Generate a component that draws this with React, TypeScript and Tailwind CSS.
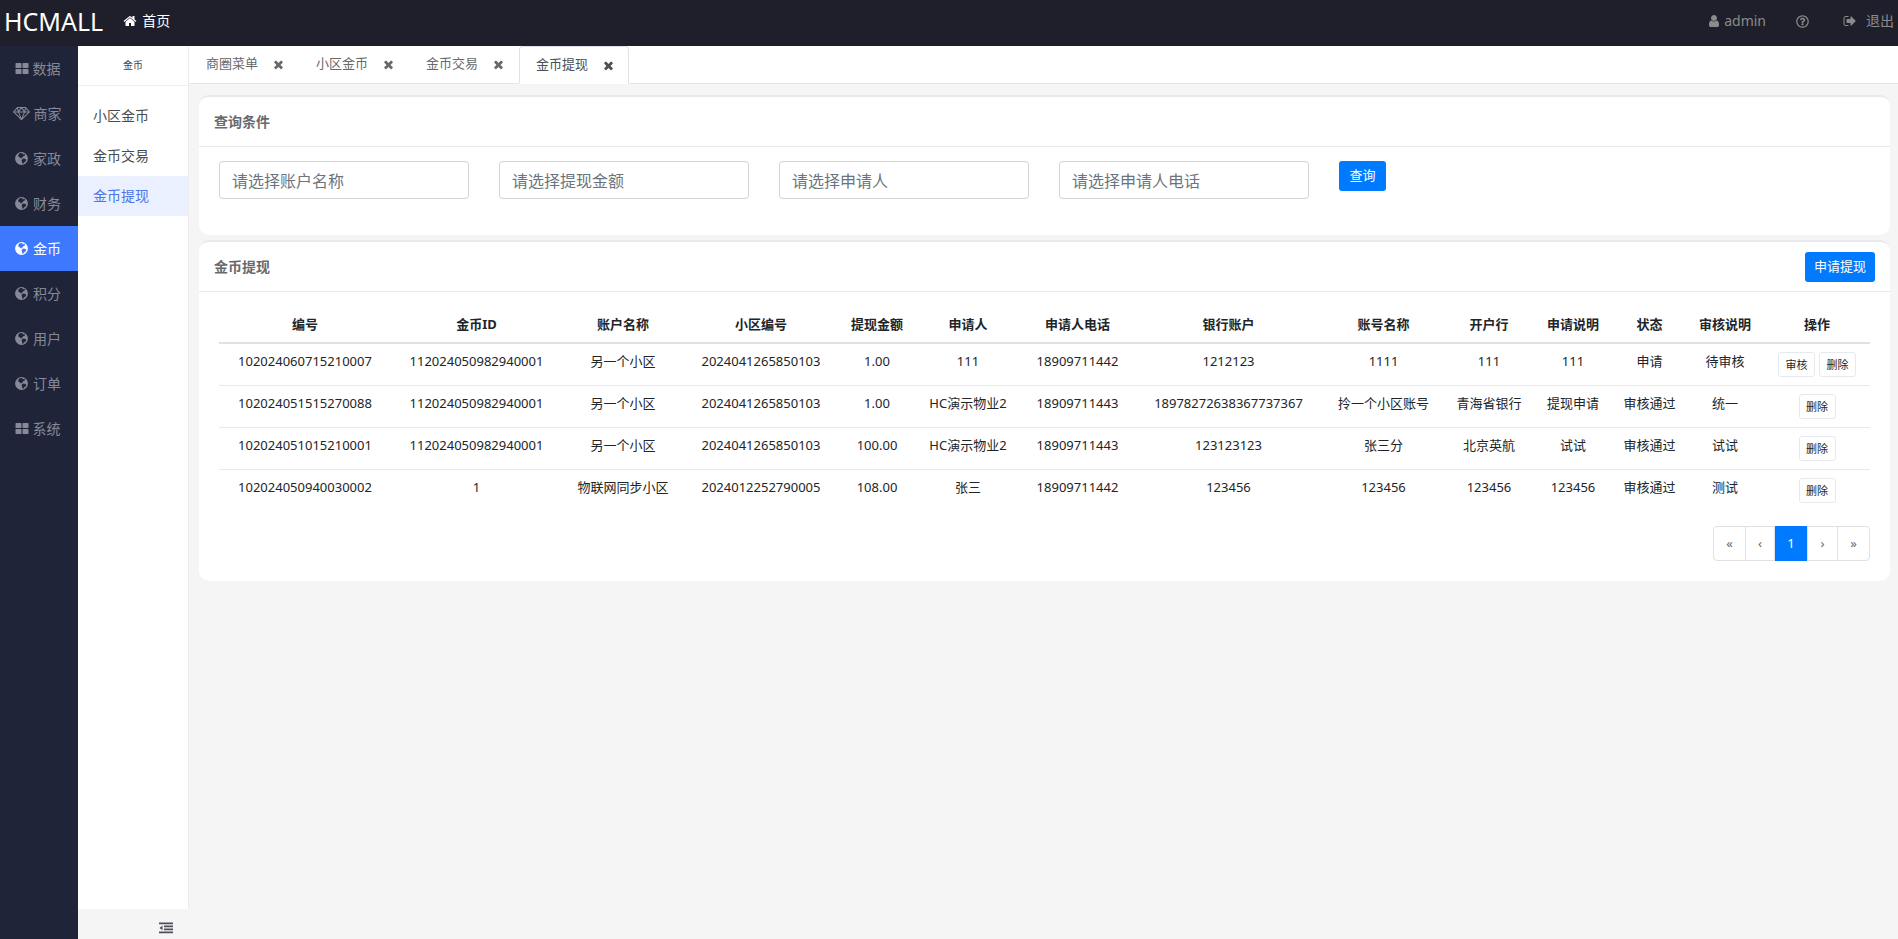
import React from 'react';
import { FaRegQuestionCircle } from 'react-icons/fa';
import clsx from 'clsx';

type IconName = 'grid' | 'diamond' | 'globe' | 'home' | 'user' | 'close' | 'signOut' | 'outdent';

const ICONS: Record<IconName, React.ReactNode> = {
  grid: (
    <>
      <rect x="64" y="128" width="768" height="640" rx="110" />
      <rect x="960" y="128" width="768" height="640" rx="110" />
      <rect x="64" y="896" width="768" height="640" rx="110" />
      <rect x="960" y="896" width="768" height="640" rx="110" />
    </>
  ),
  diamond: (
    <g fill="none" stroke="currentColor" strokeWidth="120" strokeLinejoin="round">
      <path d="M400 192H1392L1830 704L896 1640L-38 704Z" />
      <path d="M-38 704H1830M400 192L520 704L896 1600L1272 704L1392 192M520 704L896 192L1272 704" />
    </g>
  ),
  globe: (
    <path
      fillRule="evenodd"
      d="M896 128a768 768 0 1 0 0 1536a768 768 0 1 0 0-1536ZM620 300L860 230L1060 270L980 380L1120 400L1220 330L1340 440L1240 580L1100 620L1040 760L900 800L940 900L800 860L680 740L540 680L500 500ZM980 980L1120 890L1300 940L1470 1040L1400 1220L1240 1340L1120 1480L990 1520L980 1320L900 1150Z"
    />
  ),
  home: (
    <path d="M1472 992v480q0 26-19 45t-45 19h-384v-384h-256v384h-384q-26 0-45-19t-19-45v-480q0-1 .5-3t.5-3l575-474 575 474q1 2 1 6zm223-69l-62 74q-8 9-21 11h-3q-13 0-21-7l-692-577-692 577q-12 8-24 7-13-2-21-11l-62-74q-8-10-7-23.5t11-21.5l719-599q32-26 76-26t76 26l244 204v-195q0-14 9-23t23-9h192q14 0 23 9t9 23v408l219 182q10 8 11 21.5t-7 23.5z" />
  ),
  user: (
    <path d="M1536 1399q0 109-62.5 187t-150.5 78h-854q-88 0-150.5-78t-62.5-187q0-85 8.5-160.5t31.5-152 58.5-131 94-89 134.5-34.5q131 128 313 128t313-128q76 0 134.5 34.5t94 89 58.5 131 31.5 152 8.5 160.5zm-256-887q0 159-112.5 271.5t-271.5 112.5-271.5-112.5-112.5-271.5 112.5-271.5 271.5-112.5 271.5 112.5 112.5 271.5z" />
  ),
  close: (
    <path d="M1490 1322q0 40-28 68l-136 136q-28 28-68 28t-68-28l-294-294-294 294q-28 28-68 28t-68-28l-136-136q-28-28-28-68t28-68l294-294-294-294q-28-28-28-68t28-68l136-136q28-28 68-28t68 28l294 294 294-294q28-28 68-28t68 28l136 136q28 28 28 68t-28 68l-294 294 294 294q28 28 28 68z" />
  ),
  signOut: (
    <path d="M704 1440q0 4 1 20t.5 26.5-3 23.5-10 19.5-20.5 6.5h-320q-119 0-203.5-84.5t-84.5-203.5v-704q0-119 84.5-203.5t203.5-84.5h320q13 0 22.5 9.5t9.5 22.5q0 4 1 20t.5 26.5-3 23.5-10 19.5-20.5 6.5h-320q-66 0-113 47t-47 113v704q0 66 47 113t113 47h312l11.5 1 11.5 3 8 5.5 7 9 2 13.5zm928-544q0 26-19 45l-544 544q-19 19-45 19t-45-19-19-45v-288h-448q-26 0-45-19t-19-45v-384q0-26 19-45t45-19h448v-288q0-26 19-45t45-19 45 19l544 544q19 19 19 45z" />
  ),
  outdent: (
    <path d="M0 192H1792V416H0ZM640 576H1792V800H640ZM640 960H1792V1184H640ZM0 1344H1792V1568H0ZM448 576V1184L64 880Z" />
  ),
};

function Icon({ name, className }: { name: IconName; className?: string }) {
  return (
    <svg viewBox="0 0 1792 1792" fill="currentColor" aria-hidden="true" className={clsx('shrink-0 overflow-visible', className)}>
      {ICONS[name]}
    </svg>
  );
}

const MENUS: { label: string; icon: IconName }[] = [
  { label: '数据', icon: 'grid' },
  { label: '商家', icon: 'diamond' },
  { label: '家政', icon: 'globe' },
  { label: '财务', icon: 'globe' },
  { label: '金币', icon: 'globe' },
  { label: '积分', icon: 'globe' },
  { label: '用户', icon: 'globe' },
  { label: '订单', icon: 'globe' },
  { label: '系统', icon: 'grid' },
];

const SUB_MENUS = ['小区金币', '金币交易', '金币提现'];

const TABS = ['商圈菜单', '小区金币', '金币交易', '金币提现'];

const FILTERS = ['请选择账户名称', '请选择提现金额', '请选择申请人', '请选择申请人电话'];

const COLUMNS = [
  { title: '编号', width: 'w-[172px]' },
  { title: '金币ID', width: 'w-[171px]' },
  { title: '账户名称', width: 'w-[122px]' },
  { title: '小区编号', width: 'w-[154px]' },
  { title: '提现金额', width: 'w-[78px]' },
  { title: '申请人', width: 'w-[104px]' },
  { title: '申请人电话', width: 'w-[115px]' },
  { title: '银行账户', width: 'w-[187px]' },
  { title: '账号名称', width: 'w-[123px]' },
  { title: '开户行', width: 'w-[88px]' },
  { title: '申请说明', width: 'w-[80px]' },
  { title: '状态', width: 'w-[73px]' },
  { title: '审核说明', width: 'w-[78px]' },
  { title: '操作', width: 'w-[106px]' },
];

const ROWS = [
  {
    cells: ['102024060715210007', '112024050982940001', '另一个小区', '2024041265850103', '1.00', '111', '18909711442', '1212123', '1111', '111', '111', '申请', '待审核'],
    actions: ['审核', '删除'],
  },
  {
    cells: ['102024051515270088', '112024050982940001', '另一个小区', '2024041265850103', '1.00', 'HC演示物业2', '18909711443', '18978272638367737367', '拎一个小区账号', '青海省银行', '提现申请', '审核通过', '统一'],
    actions: ['删除'],
  },
  {
    cells: ['102024051015210001', '112024050982940001', '另一个小区', '2024041265850103', '100.00', 'HC演示物业2', '18909711443', '123123123', '张三分', '北京英航', '试试', '审核通过', '试试'],
    actions: ['删除'],
  },
  {
    cells: ['102024050940030002', '1', '物联网同步小区', '2024012252790005', '108.00', '张三', '18909711442', '123456', '123456', '123456', '123456', '审核通过', '测试'],
    actions: ['删除'],
  },
];

const PAGES = [
  { label: '«', width: 'w-8' },
  { label: '‹', width: 'w-[29px]' },
  { label: '1', width: 'w-[33px]', active: true },
  { label: '›', width: 'w-[30px]' },
  { label: '»', width: 'w-[31px]' },
];

function Header() {
  return (
    <header className="flex h-[46px] shrink-0 items-center justify-between bg-[#1e1f2b] pb-1 pl-1 pr-1">
      <div className="flex items-center">
        <h1 className="text-[25px] leading-none text-white">HCMALL</h1>
        <a href="#home" className="ml-5 flex items-center gap-[5px] text-sm text-white">
          <Icon name="home" className="size-[14px]" />
          首页
        </a>
      </div>
      <nav className="flex items-center text-sm text-[#8b8b8b]">
        <a href="#user" className="flex items-center gap-[3px]">
          <Icon name="user" className="size-[14px]" />
          admin
        </a>
        <a href="#help" aria-label="帮助" className="ml-[30px]">
          <FaRegQuestionCircle className="size-[13px]" />
        </a>
        <a href="#logout" className="ml-[34px] flex items-center gap-[9px]">
          <Icon name="signOut" className="size-[14px]" />
          退出
        </a>
      </nav>
    </header>
  );
}

function MainMenu() {
  return (
    <nav className="w-[78px] shrink-0 bg-[#1f2438] text-sm">
      {MENUS.map(({ label, icon }) => (
        <a
          key={label}
          href="#menu"
          className={clsx(
            'flex h-[45px] items-center justify-center pr-[3px]',
            icon === 'diamond' ? 'gap-[5px]' : 'gap-1',
            label === '金币' ? 'bg-[#3e78ff] text-white' : 'text-[#868a98]'
          )}
        >
          <Icon name={icon} className={icon === 'grid' ? 'size-[14px]' : 'size-[15px]'} />
          {label}
        </a>
      ))}
    </nav>
  );
}

function SubMenu() {
  return (
    <aside className="flex w-[111px] shrink-0 flex-col">
      <div className="flex flex-1 flex-col border-r border-[#ececec] bg-white">
        <div className="flex h-10 items-center justify-center border-b border-[#efefef] text-[10px] text-[#444]">金币</div>
        <nav className="mt-[10px] text-sm">
          {SUB_MENUS.map((label) => (
            <a
              key={label}
              href="#sub"
              className={clsx(
                'flex h-10 items-center pl-[15px]',
                label === '金币提现' ? 'bg-[#eaf0ff] text-[#4b76e8]' : 'text-[#4a4d50]'
              )}
            >
              {label}
            </a>
          ))}
        </nav>
      </div>
      <div className="flex h-[30px] items-center justify-end pr-4 pt-2">
        <button type="button" aria-label="收起菜单" className="text-[#4c5058]">
          <Icon name="outdent" className="size-[14px]" />
        </button>
      </div>
    </aside>
  );
}

function Tabs() {
  return (
    <div className="flex h-[38px] items-end border-b border-[#e4e6e9] bg-white text-[13px]">
      {TABS.map((label) => {
        const active = label === '金币提现';
        return (
          <div
            key={label}
            className={clsx(
              'flex h-[38px] items-center gap-[14px] rounded-t border pl-4 pr-[13px]',
              active ? '-mb-px border-[#dee2e6] border-b-white bg-white text-[#495057]' : 'border-transparent text-[#676a6c]'
            )}
          >
            <a href="#tab">{label}</a>
            <button type="button" aria-label={`关闭${label}`}>
              <Icon name="close" className="size-[13px]" />
            </button>
          </div>
        );
      })}
    </div>
  );
}

function Card({ title, extra, children }: { title: string; extra?: React.ReactNode; children: React.ReactNode }) {
  return (
    <section className="rounded-[10px] border-t-2 border-[#e7eaec] bg-white">
      <div className="flex h-[50px] items-center justify-between border-b border-[#e7eaec] px-[15px]">
        <h2 className="text-sm font-bold text-[#676a6c]">{title}</h2>
        {extra}
      </div>
      {children}
    </section>
  );
}

function SearchCard() {
  return (
    <Card title="查询条件">
      <form className="flex h-[88px] items-start gap-[30px] px-5 pt-[14px]">
        {FILTERS.map((placeholder) => (
          <input
            key={placeholder}
            type="text"
            aria-label={placeholder}
            placeholder={placeholder}
            className="h-[38px] w-[250px] min-w-0 rounded border border-[#ced4da] bg-white px-3 pt-[2px] text-base text-[#495057] placeholder:text-[#6c757d]"
          />
        ))}
        <button type="button" className="h-[30px] w-[47px] shrink-0 rounded-[3px] bg-[#007bff] text-[13px] text-white">
          查询
        </button>
      </form>
    </Card>
  );
}

function WithdrawTable() {
  return (
    <table className="w-full table-fixed text-center text-[13px] leading-5 text-[#212529]">
      <thead>
        <tr className="h-[37px] border-b-2 border-[#dee2e6]">
          {COLUMNS.map(({ title, width }) => (
            <th key={title} scope="col" className={clsx('whitespace-nowrap font-bold', width)}>
              {title}
            </th>
          ))}
        </tr>
      </thead>
      <tbody>
        {ROWS.map(({ cells, actions }) => (
          <tr key={cells[0]} className="h-[42px] border-b border-[#e7eaec] align-top last:border-b-0">
            {cells.map((cell, i) => (
              <td key={i} className="whitespace-nowrap pt-[7px]">
                {cell}
              </td>
            ))}
            <td className="pt-2">
              <div className="flex justify-center gap-1">
                {actions.map((action) => (
                  <button
                    key={action}
                    type="button"
                    className="h-[25px] w-[37px] rounded-[3px] border border-[#e7eaec] bg-white text-[11px] leading-none"
                  >
                    {action}
                  </button>
                ))}
              </div>
            </td>
          </tr>
        ))}
      </tbody>
    </table>
  );
}

function Pagination() {
  return (
    <nav aria-label="分页" className="mt-[15px] flex justify-end">
      <div className="flex rounded border border-[#dee2e6] text-[13px] text-[#676a6c]">
        {PAGES.map(({ label, width, active }) => (
          <button
            key={label}
            type="button"
            className={clsx(
              'border-r border-[#dee2e6] last:border-r-0',
              width,
              active ? '-my-px h-[35px] border-[#007bff] bg-[#007bff] text-white' : 'h-[33px]'
            )}
          >
            {label}
          </button>
        ))}
      </div>
    </nav>
  );
}

export default function App() {
  return (
    <div className="flex min-h-screen flex-col bg-[#f5f5f5] font-['Noto_Sans','Noto_Sans_CJK_SC',sans-serif]">
      <Header />
      <div className="flex flex-1">
        <MainMenu />
        <SubMenu />
        <main className="min-w-0 flex-1">
          <Tabs />
          <div className="flex flex-col gap-[5px] pl-[10px] pr-2 pt-[11px]">
            <SearchCard />
            <Card
              title="金币提现"
              extra={
                <button type="button" className="h-[30px] w-[70px] rounded-[3px] bg-[#007bff] text-[13px] text-white">
                  申请提现
                </button>
              }
            >
              <div className="px-5 pb-5 pt-[14px]">
                <WithdrawTable />
                <Pagination />
              </div>
            </Card>
          </div>
        </main>
      </div>
    </div>
  );
}
